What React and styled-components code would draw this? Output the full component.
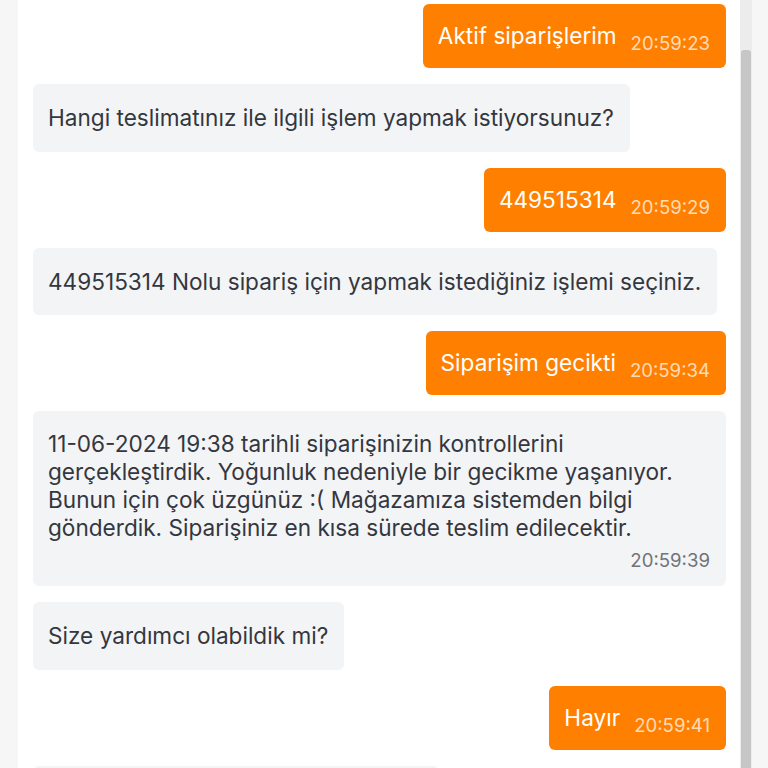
import styled, { createGlobalStyle } from "styled-components";

const GlobalStyle = createGlobalStyle`
    html, body {
        margin: 0;
        padding: 0;
        height: 768px;
        overflow: hidden;
        background: #f6f6f6;
    }
    #root {
        height: 100%;
    }
`;

const Page = styled.div`
    display: flex;
    height: 768px;
    font-family: Inter, "Noto Sans", sans-serif;
`;

const Gutter = styled.div`
    width: ${(p) => p.$w}px;
    flex-shrink: 0;
    background: #f6f6f6;
`;

const ChatPanel = styled.div`
    flex: 1;
    min-width: 0;
    background: #ffffff;
    overflow: hidden;
    padding: 4px 14px 0 15px;
    display: flex;
    flex-direction: column;
    gap: 16px;
`;

const ScrollTrack = styled.div`
    width: 12px;
    flex-shrink: 0;
    background: #ececec;
    display: flex;
    flex-direction: column;
    align-items: center;
`;

const ScrollThumb = styled.div`
    margin-top: 50px;
    width: 10px;
    flex: 1;
    background: #c6c6c6;
    border-radius: 3px 3px 0 0;
`;

const Row = styled.div`
    display: flex;
    justify-content: ${(p) => (p.$mine ? "flex-end" : "flex-start")};
    flex-shrink: 0;
`;

const UserBubble = styled.div`
    background: #ff7f00;
    color: #ffffff;
    border-radius: 6px;
    padding: 18px 16px 18px 15px;
    display: flex;
    align-items: flex-end;
    gap: 14px;
    font-size: 22.6px;
    line-height: 28px;
`;

const UserTime = styled.span`
    font-size: 18.6px;
    line-height: 22px;
    margin-bottom: -4px;
    color: rgba(255, 255, 255, 0.72);
`;

const BotBubble = styled.div`
    background: #f3f4f6;
    color: #333740;
    border-radius: 6px;
    padding: ${(p) => (p.$time ? "19px 16px 15px 15px" : "20px 16px 20px 15px")};
    font-size: 22.6px;
    line-height: 27.7px;
    max-width: 100%;
    box-sizing: border-box;
    display: flex;
    flex-direction: column;
`;

const BotTime = styled.span`
    align-self: flex-end;
    margin-top: 8px;
    font-size: 18.6px;
    line-height: 22px;
    color: #707378;
`;

const messages = [
    { mine: true, text: "Aktif siparişlerim", time: "20:59:23" },
    { mine: false, text: "Hangi teslimatınız ile ilgili işlem yapmak istiyorsunuz?" },
    { mine: true, text: "449515314", time: "20:59:29" },
    { mine: false, text: "449515314 Nolu sipariş için yapmak istediğiniz işlemi seçiniz." },
    { mine: true, text: "Siparişim gecikti", time: "20:59:34" },
    {
        mine: false,
        text: "11-06-2024 19:38 tarihli siparişinizin kontrollerini gerçekleştirdik. Yoğunluk nedeniyle bir gecikme yaşanıyor. Bunun için çok üzgünüz :( Mağazamıza sistemden bilgi gönderdik. Siparişiniz en kısa sürede teslim edilecektir.",
        time: "20:59:39",
    },
    { mine: false, text: "Size yardımcı olabildik mi?" },
    { mine: true, text: "Hayır", time: "20:59:41" },
    { mine: false, text: "Size başka nasıl yardımcı olabiliriz?" },
];

function App() {
    return (
        <>
            <GlobalStyle />
            <Page>
                <Gutter $w={18} />
                <ChatPanel>
                    {messages.map((m, i) => (
                        <Row key={i} $mine={m.mine}>
                            {m.mine ? (
                                <UserBubble>
                                    <span>{m.text}</span>
                                    <UserTime>{m.time}</UserTime>
                                </UserBubble>
                            ) : (
                                <BotBubble $time={!!m.time}>
                                    <span>{m.text}</span>
                                    {m.time && <BotTime>{m.time}</BotTime>}
                                </BotBubble>
                            )}
                        </Row>
                    ))}
                </ChatPanel>
                <ScrollTrack>
                    <ScrollThumb />
                </ScrollTrack>
                <Gutter $w={16} />
            </Page>
        </>
    );
}

export default App;
